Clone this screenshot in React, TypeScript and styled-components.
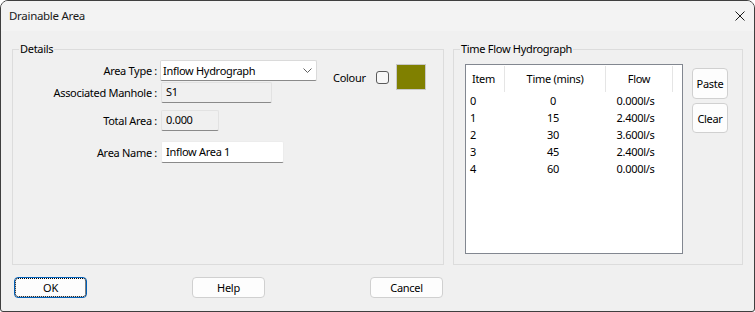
import React from "react";
import styled, { createGlobalStyle } from "styled-components";

const GlobalStyle = createGlobalStyle`
  html, body {
    margin: 0;
    padding: 0;
    background: #ffffff;
  }
  body {
    font-family: "Noto Sans", "Open Sans", sans-serif;
    font-size: 11px;
    letter-spacing: -0.3px;
    color: #000;
  }
  * {
    box-sizing: border-box;
  }
`;

interface Row {
  item: number;
  time: number;
  flow: string;
}

const rows: Row[] = [
  { item: 0, time: 0, flow: "0.000l/s" },
  { item: 1, time: 15, flow: "2.400l/s" },
  { item: 2, time: 30, flow: "3.600l/s" },
  { item: 3, time: 45, flow: "2.400l/s" },
  { item: 4, time: 60, flow: "0.000l/s" },
];

function App() {
  return (
    <>
      <GlobalStyle />
      <Window>
        <TitleBar>
          <Title>Drainable Area</Title>
          <CloseButton>
            <svg width="10" height="10" viewBox="0 0 10 10">
              <path d="M0.5 0.5 L9.5 9.5 M9.5 0.5 L0.5 9.5" stroke="#1a1a1a" strokeWidth="1" />
            </svg>
          </CloseButton>
        </TitleBar>

        <Body>
          <Groups>
            <Group $width={432}>
              <Legend>Details</Legend>
              <DetailsContent>
                <Form>
                  <FormRow $top={0}>
                    <Label>Area Type :</Label>
                    <Combo>
                      <span>Inflow Hydrograph</span>
                      <svg width="9" height="5" viewBox="0 0 9 5">
                        <path d="M0.5 0.5 L4.5 4.5 L8.5 0.5" stroke="#606060" fill="none" strokeWidth="1" />
                      </svg>
                    </Combo>
                  </FormRow>
                  <FormRow $top={1}>
                    <Label>Associated Manhole :</Label>
                    <TextField $width={111} $readOnly>S1</TextField>
                  </FormRow>
                  <FormRow $top={7}>
                    <Label>Total Area :</Label>
                    <TextField $width={58} $readOnly>0.000</TextField>
                  </FormRow>
                  <FormRow $top={10} $height={22}>
                    <Label>Area Name :</Label>
                    <TextField $width={123}>Inflow Area 1</TextField>
                  </FormRow>
                </Form>

                <ColourRow>
                  <span>Colour</span>
                  <CheckBox />
                  <Swatch $color="#808000" />
                </ColourRow>
              </DetailsContent>
            </Group>

            <Group $width={290}>
              <Legend>Time Flow Hydrograph</Legend>
              <HydroContent>
                <ListView>
                  <ListHeader>
                    <HeaderCell $width={39} $align="left">Item</HeaderCell>
                    <HeaderCell $width={101} $align="center">Time (mins)</HeaderCell>
                    <HeaderCell $width={67} $align="center">Flow</HeaderCell>
                  </ListHeader>
                  {rows.map((r) => (
                    <ListRow key={r.item}>
                      <Cell $width={39} $align="left">{r.item}</Cell>
                      <Cell $width={101} $align="center" $shift={5}>{r.time}</Cell>
                      <Cell $width={67} $align="center" $shift={8}>{r.flow}</Cell>
                    </ListRow>
                  ))}
                </ListView>
                <SideButtons>
                  <SmallButton $height={31}>Paste</SmallButton>
                  <SmallButton $height={30}>Clear</SmallButton>
                </SideButtons>
              </HydroContent>
            </Group>
          </Groups>

          <ButtonRow>
            <DialogButton $focused>OK</DialogButton>
            <DialogButton>Help</DialogButton>
            <DialogButton>Cancel</DialogButton>
          </ButtonRow>
        </Body>
      </Window>
    </>
  );
}

const Window = styled.div`
  width: 755px;
  height: 312px;
  border: 1px solid #3f3f3f;
  border-radius: 8px 8px 3px 3px;
  background: #f0f0f0;
  display: flex;
  flex-direction: column;
  overflow: hidden;
`;

const TitleBar = styled.div`
  height: 30px;
  background: #f3f3f3;
  display: flex;
  align-items: center;
  justify-content: space-between;
  padding: 0 9px 1px 8px;
`;

const Title = styled.span`
  font-size: 11.5px;
  color: #1a1a1a;
`;

const CloseButton = styled.div`
  width: 10px;
  height: 10px;
  display: flex;
  margin-top: 1px;
`;

const Body = styled.div`
  flex: 1;
  padding: 10px 11px 0 11px;
  display: flex;
  flex-direction: column;
`;

const Groups = styled.div`
  display: flex;
  gap: 9px;
`;

const Group = styled.fieldset<{ $width: number }>`
  width: ${(p) => p.$width}px;
  height: 224px;
  margin: 0;
  padding: 0;
  min-width: 0;
  border: 1px solid #dcdcdc;
`;

const Legend = styled.legend`
  margin-left: 6px;
  padding: 0 1px;
  line-height: 16px;
  font-size: 11px;
  color: #000;
`;

const DetailsContent = styled.div`
  display: flex;
  align-items: flex-start;
  padding-top: 3px;
`;

const Form = styled.div`
  display: flex;
  flex-direction: column;
`;

const FormRow = styled.div<{ $top: number; $height?: number }>`
  display: flex;
  align-items: center;
  height: ${(p) => p.$height ?? 21}px;
  margin-top: ${(p) => p.$top}px;
`;

const Label = styled.span`
  width: 144px;
  margin-right: 3px;
  text-align: right;
  white-space: nowrap;
`;

const Combo = styled.div`
  width: 157px;
  height: 100%;
  background: #ffffff;
  border: 1px solid #dadada;
  border-bottom-color: #8a8a8a;
  border-radius: 2px;
  display: flex;
  align-items: center;
  justify-content: space-between;
  padding: 0 4px 0 2px;

  svg {
    display: block;
  }
`;

const TextField = styled.div<{ $width: number; $readOnly?: boolean }>`
  width: ${(p) => p.$width}px;
  height: 100%;
  margin-left: 1px;
  padding: 1px 0 3px 4px;
  display: flex;
  align-items: center;
  background: ${(p) => (p.$readOnly ? "#f0f0f0" : "#ffffff")};
  border: 1px solid ${(p) => (p.$readOnly ? "#e2e2e2" : "#ececec")};
  border-bottom-color: #8a8a8a;
  border-radius: 2px;
  line-height: 1;
`;

const ColourRow = styled.div`
  display: flex;
  align-items: center;
  margin: 4px 0 0 16px;
`;

const CheckBox = styled.div`
  width: 13px;
  height: 13px;
  margin-left: 10px;
  border: 1px solid #5a5a5a;
  border-radius: 3px;
  background: #f7f7f7;
`;

const Swatch = styled.div<{ $color: string }>`
  width: 30px;
  height: 26px;
  margin-left: 7px;
  background: ${(p) => p.$color};
  border: 1px solid #c8c8c8;
`;

const HydroContent = styled.div`
  display: flex;
  align-items: flex-start;
  padding: 7px 0 0 11px;
`;

const ListView = styled.div`
  width: 218px;
  height: 190px;
  background: #ffffff;
  border: 1px solid #828790;
`;

const ListHeader = styled.div`
  display: flex;
  height: 27px;
  padding-top: 1px;
`;

const HeaderCell = styled.div<{ $width: number; $align: "left" | "center" }>`
  width: ${(p) => p.$width}px;
  border-right: 1px solid #e5e5e5;
  display: flex;
  align-items: center;
  justify-content: ${(p) => (p.$align === "left" ? "flex-start" : "center")};
  padding-left: ${(p) => (p.$align === "left" ? 6 : 0)}px;
  padding-bottom: 1px;
`;

const ListRow = styled.div`
  display: flex;
  height: 17px;
  align-items: center;
`;

const Cell = styled.div<{ $width: number; $align: "left" | "center"; $shift?: number }>`
  width: ${(p) => p.$width}px;
  text-align: ${(p) => p.$align};
  padding-left: ${(p) => (p.$align === "left" ? 4 : 0)}px;
  padding-right: ${(p) => p.$shift ?? 0}px;
  white-space: nowrap;
`;

const SideButtons = styled.div`
  display: flex;
  flex-direction: column;
  gap: 4px;
  margin: 4px 0 0 9px;
`;

const SmallButton = styled.div<{ $height: number }>`
  width: 36px;
  height: ${(p) => p.$height}px;
  background: #fdfdfd;
  border: 1px solid #d0d0d0;
  border-radius: 4px;
  display: flex;
  align-items: center;
  justify-content: center;
`;

const ButtonRow = styled.div`
  display: grid;
  grid-template-columns: repeat(3, 73px);
  column-gap: 105px;
  margin: 12px 0 0 2px;
`;

const DialogButton = styled.div<{ $focused?: boolean }>`
  height: 21px;
  background: #fdfdfd;
  border: 1px solid ${(p) => (p.$focused ? "#005fb8" : "#d0d0d0")};
  border-radius: 4px;
  display: flex;
  align-items: center;
  justify-content: center;
  outline: ${(p) => (p.$focused ? "1px dotted #000" : "none")};
  outline-offset: -2px;
`;

export default App;
